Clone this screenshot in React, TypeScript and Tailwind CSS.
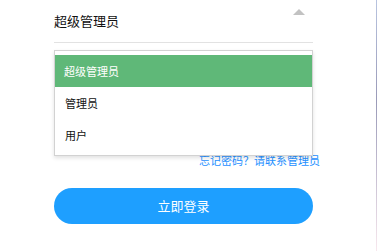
export default function App() {
  const options = ["超级管理员", "管理员", "用户"];
  const selected = "超级管理员";

  return (
    <div
      className="flex h-[251px] w-[377px] bg-white"
      style={{ fontFamily: '"Microsoft YaHei", "Noto Sans CJK SC", "Liberation Sans", sans-serif' }}
    >
      <div className="flex-1 pl-[54px]">
        <div className="relative w-[259px]">
          {/* role select */}
          <div className="relative flex h-[43px] items-center border-b border-[#e2e2e2] pb-[1px]">
            <span className="text-[13px] leading-none text-[#111]">{selected}</span>
            <span className="absolute right-[8px] top-[9px] h-0 w-0 border-x-[6px] border-b-[6px] border-x-transparent border-b-[#c2c2c2]" />
          </div>

          <div className="absolute left-0 top-[50px] z-10 w-[259px] border border-[#d2d2d2] bg-white py-[4px] shadow-[0_2px_4px_rgba(0,0,0,0.12)]">
            {options.map((o) => (
              <div
                key={o}
                className={
                  o === selected
                    ? "flex h-[32px] items-center bg-[#5fb878] pl-[9px] text-[11px] text-white"
                    : "flex h-[32px] items-center pl-[10px] text-[11px] text-[#111]"
                }
              >
                {o}
              </div>
            ))}
          </div>

          <div className="-mr-[7px] mt-[109px] flex h-[16px] items-center justify-end">
            <a className="text-[11px] leading-none text-[#1e90ff]">忘记密码？请联系管理员</a>
          </div>

          <button className="mt-[20px] flex h-[36px] w-[259px] items-center justify-center rounded-full bg-[#1e9fff] text-[13px] text-white">
            立即登录
          </button>
        </div>
      </div>
      <div className="h-full w-px bg-gradient-to-b from-[#b8c4e0] via-[#9a9ab8] via-40% to-[#f8e8ee]" />
    </div>
  );
}
